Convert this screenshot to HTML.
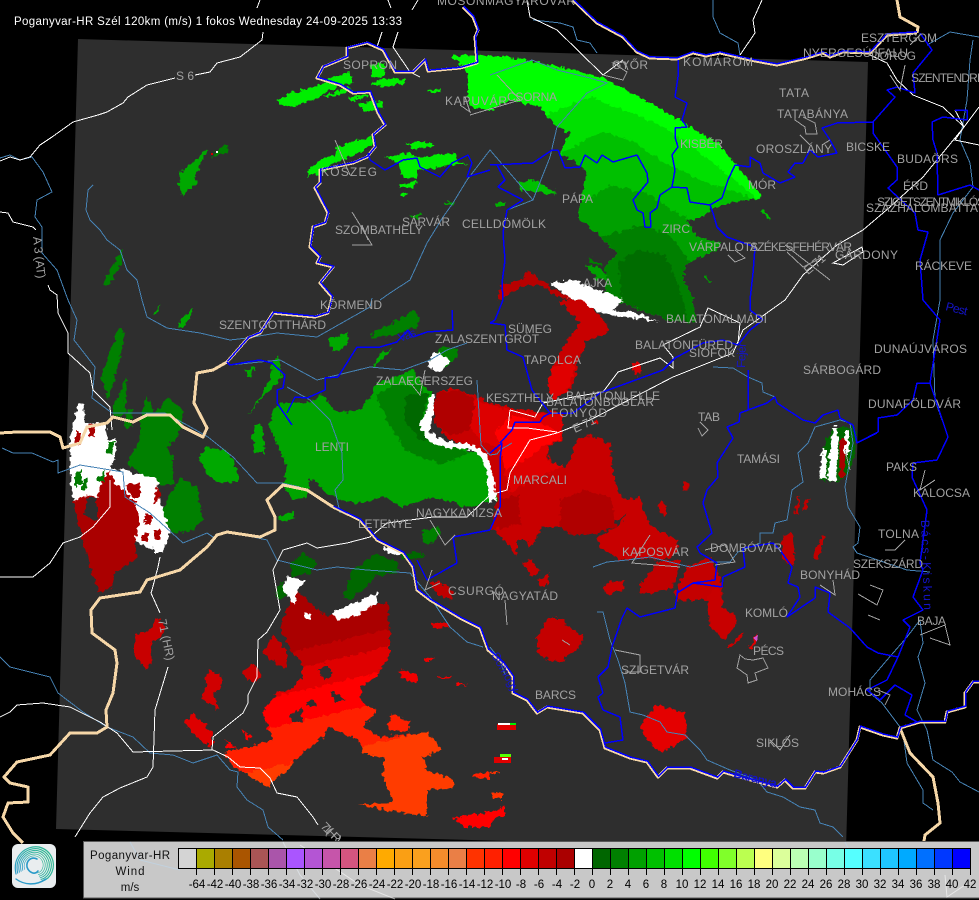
<!DOCTYPE html>
<html><head><meta charset="utf-8"><title>Poganyvar-HR</title>
<style>
html,body{margin:0;padding:0;background:#000;width:979px;height:900px;overflow:hidden}
svg{display:block;font-family:"Liberation Sans",sans-serif}
.lb text{fill:#a2a2a2;font-size:12px}
.rg text{fill:#1414c8;font-size:12px}
.t text{fill:#000;font-size:11.5px;text-anchor:middle}
.ln{shape-rendering:crispEdges}
</style></head><body>
<svg width="979" height="900" viewBox="0 0 979 900" xmlns="http://www.w3.org/2000/svg">
<defs>
<filter id="rough" filterUnits="userSpaceOnUse" x="0" y="0" width="979" height="900" color-interpolation-filters="sRGB">
<feTurbulence type="fractalNoise" baseFrequency="0.22" numOctaves="2" seed="4" result="n"/>
<feDisplacementMap in="SourceGraphic" in2="n" scale="7" xChannelSelector="R" yChannelSelector="G"/>
</filter>
<clipPath id="cm"><polygon points="453,55 490,56 523,59 573,70 603,78 640,97 680,120 717,143 737,165 763,198 747,200 713,207 703,217 687,220 697,237 720,243 717,250 700,257 687,263 683,277 693,300 696,322 668,320 620,302 605,290 605,267 618,253 600,237 578,217 583,190 587,170 560,153 570,133 557,127 540,107 510,100 490,110 472,108 468,95 468,78 463,65 453,60"/></clipPath>
<clipPath id="co"><polygon points="295,590 327,617 353,607 388,603 390,633 390,653 377,677 360,687 363,703 377,710 363,727 380,737 427,733 443,750 423,757 427,770 453,780 453,788 427,790 427,817 358,805 393,802 383,777 383,757 363,753 358,740 328,727 323,737 297,757 287,772 273,780 270,788 233,767 225,752 247,747 263,743 273,740 262,713 277,693 290,690 303,677 302,663 290,650 280,627"/></clipPath>
<linearGradient id="og" gradientUnits="userSpaceOnUse" x1="350" y1="620" x2="390" y2="790">
<stop offset="0" stop-color="#aa0000"/><stop offset=".1" stop-color="#aa0000"/><stop offset=".1" stop-color="#c00000"/><stop offset=".2" stop-color="#c00000"/><stop offset=".2" stop-color="#e00000"/><stop offset=".33" stop-color="#e00000"/><stop offset=".33" stop-color="#ff0000"/><stop offset=".5" stop-color="#ff0000"/><stop offset=".5" stop-color="#ff2000"/><stop offset=".72" stop-color="#ff2000"/><stop offset=".72" stop-color="#ff3c00"/><stop offset="1" stop-color="#ff3c00"/>
</linearGradient>
<linearGradient id="lg" gradientUnits="userSpaceOnUse" x1="14" y1="872" x2="54" y2="852">
<stop offset="0" stop-color="#2a9ac8"/><stop offset=".45" stop-color="#2eb0a5"/><stop offset="1" stop-color="#2cb88c"/>
</linearGradient>
<path id="sp" d="M16,874 C12,856 26,845 39,847 C51,850 56,862 52,872 C50,877 46,880 42,881"/>
<path id="hu" d="M463,7 473,17 478,30 475,37 477,63 460,68 428,71 425,60 413,72 395,72 383,50 367,43 347,48 347,57 323,67 317,78 340,85 353,93 370,92 378,113 385,125 373,135 375,147 367,157 353,163 320,170 320,183 315,188 328,213 325,223 313,227 310,247 320,257 317,263 333,267 320,283 332,297 328,313 315,317 273,313 260,333 248,338 227,362"/>
<path id="hu2" d="M333,507 360,520 377,540 403,553 413,567 417,590 430,600 460,618 480,628 488,650 503,663 513,677 513,693 527,700 537,713 547,707 583,713 600,730 605,748 630,758 647,762 658,777 667,768 690,768 717,778 723,772 743,778 777,787 785,780 793,788 805,788 815,772 823,773 840,767 857,740 860,727 883,735 897,738 900,728 920,722 945,722 947,712 965,707 965,693 973,682 979,682"/>
<path id="hu3" d="M573,0 597,23 623,37 637,52 650,58 677,59 693,53 706,56 720,53 750,60 777,65 807,58 823,53 830,57 843,52 870,53 887,35 917,33"/>
</defs>

<rect width="979" height="900" fill="#000"/>
<polygon points="78,39 868,62 846,850 56,829" fill="#2e2e2e"/>

<g filter="url(#rough)">
<!-- main green wedge -->
<g clip-path="url(#cm)">
<rect x="450" y="50" width="320" height="280" fill="#00ff00"/>
<polygon points="505,120 545,115 590,97 625,110 660,125 690,145 735,180 770,210 770,330 500,330" fill="#00e000"/>
<polygon points="550,160 600,132 630,140 660,160 700,180 745,195 770,210 770,330 550,330" fill="#00c000"/>
<polygon points="578,205 610,185 650,195 680,215 720,232 725,260 700,330 580,330" fill="#00a000"/>
<polygon points="598,238 640,225 670,235 690,262 700,330 600,330" fill="#008000"/>
<polygon points="618,262 640,250 665,255 680,290 690,330 625,330" fill="#006c00"/>
</g>
<polygon points="518,183 533,180 553,190 557,195 537,192 520,190" fill="#00c000"/>
<polygon points="587,257 600,263 602,267 590,263" fill="#008000"/>
<polygon points="763,210 770,218 768,220 762,212" fill="#00c000"/>
<polygon points="705,275 712,283 710,284 704,277" fill="#00a000"/>
<polygon points="496,203 506,203 506,206 496,206" fill="#00b000"/>
<polygon points="410,215 422,214 418,218 411,218" fill="#00a000"/>

<!-- small greens north -->
<g fill="#00ee00">
<polygon points="276,100 283,97 293,92 313,88 330,78 350,72 353,83 335,88 313,100 293,107 288,108 277,103"/>
<polygon points="322,97 347,87 353,90 333,97"/>
<polygon points="349,98 368,93 368,97 350,101"/>
<polygon points="358,103 383,102 383,107 370,112 360,108"/>
<polygon points="370,65 385,63 385,77 372,78"/>
<polygon points="372,82 390,78 405,80 405,83 388,87 372,85"/>
<polygon points="428,90 441,89 440,92 428,93"/>
<polygon points="307,170 320,160 335,155 337,147 370,137 375,143 353,157 333,163 320,173 308,177"/>
<polygon points="407,143 430,141 434,147 413,149"/>
<polygon points="385,157 407,153 417,157 455,153 457,162 467,163 460,165 417,170 417,178 403,178 398,163"/>
<polygon points="400,183 417,181 412,188 400,188"/>
<polygon points="400,193 409,192 402,197"/>
</g>
<g fill="#00a800">
<polygon points="180,173 193,163 207,150 200,165 195,177 197,183 182,195 179,183"/>
<polygon points="443,202 455,202 453,205 443,205"/>
<polygon points="178,328 183,317 193,307 192,315 182,328"/>
<polygon points="153,315 160,303 157,315"/>
<polygon points="245,370 255,367 250,378"/>
<polygon points="248,417 270,380 272,363 278,357 282,377 263,397 253,410"/>
<polygon points="255,425 262,425 265,453 255,453 252,440"/>
<polygon points="328,340 347,333 348,343 338,352 328,345"/>
<polygon points="372,367 380,353 393,348 383,358 373,368"/>
<polygon points="278,517 293,512 295,518 282,522"/>
<polygon points="198,457 208,447 227,450 238,470 238,482 217,483 207,473"/>
</g>
<g fill="#008000">
<polygon points="213,153 229,144 228,152 213,158"/>
<polygon points="103,285 117,257 123,248 122,263 108,285"/>
<polygon points="115,340 118,328 125,332 120,360 113,383 108,400 102,380 105,363"/>
<polygon points="113,407 127,377 125,415 113,415"/>
<polygon points="127,410 132,410 131,427 125,430"/>
<polygon points="140,417 147,395 155,413 167,397 183,410 183,423 177,437 167,447 173,457 173,485 157,485 143,477 127,463 140,440"/>
<polygon points="160,513 180,478 197,487 203,520 193,530 173,533"/>
<polygon points="372,333 393,323 413,310 420,317 417,327 393,335 373,338"/>
<polygon points="430,360 443,347 457,348 457,357 447,367 432,367"/>
<polygon points="422,530 437,527 442,533 430,545 423,540"/>
<polygon points="290,563 303,552 317,563 310,573 293,577" fill="#006800"/>
<polygon points="343,597 353,570 377,553 398,563 397,573 373,577 367,587 350,600" fill="#006800"/>
<polygon points="275,593 283,580 287,595 280,600" fill="#006800"/>
<polygon points="400,555 420,551 425,557 405,560" fill="#006800"/>
</g>

<!-- left big green blob -->
<polygon points="280,403 307,403 323,395 337,413 360,410 373,393 377,383 393,377 413,370 427,390 433,393 420,427 447,443 490,457 497,500 467,507 433,497 403,507 383,497 362,503 347,503 327,493 310,477 307,497 293,500 283,487 287,467 270,427 272,413" fill="#00a400"/>
<polygon points="375,395 395,385 420,385 428,400 420,430 445,445 470,452 440,465 405,450 390,425" fill="#008000"/>
<polygon points="405,395 428,393 420,428 440,440 420,440 405,420" fill="#006800"/>

<!-- central red -->
<polygon points="437,393 453,388 480,397 490,403 520,410 562,413 562,440 548,447 550,462 565,468 570,460 577,440 590,435 610,443 612,467 618,493 627,500 640,497 647,520 657,530 677,540 678,550 665,560 640,558 620,560 600,547 597,537 617,527 627,513 612,525 597,533 573,535 560,527 543,527 530,547 525,540 517,540 517,557 510,547 495,530 490,530 497,505 497,500 490,470 480,450 470,445 450,440 436,425 433,410" fill="#c80000"/>
<polygon points="470,397 490,405 520,412 562,415 562,438 548,447 548,462 565,466 530,480 510,495 500,450 480,440 468,425" fill="#dd0000"/>
<polygon points="495,430 515,415 545,425 560,432 560,440 545,445 525,460 505,470" fill="#ff0000"/>
<polygon points="437,393 460,390 475,400 470,430 450,435 436,425 433,410" fill="#b00000"/>
<polygon points="560,500 585,490 610,497 617,527 597,533 573,535 560,527" fill="#b00000"/>
<polygon points="497,500 520,495 520,525 490,530" fill="#b00000"/>
<!-- white band -->
<polygon points="435,395 430,395 427,410 420,425 425,438 440,447 470,449 482,457 488,478 488,503 496,500 494,478 486,453 470,444 445,441 430,432 433,412" fill="#fff"/>
<polygon points="433,352 445,355 450,362 438,372 428,367" fill="#fff"/>

<!-- Ajka red & white -->
<polygon points="497,300 500,285 525,278 527,272 535,275 550,287 575,300 560,298 540,285 525,285 512,292 505,298" fill="#b80000"/>
<polygon points="550,283 577,280 590,287 610,293 623,300 613,310 637,313 660,322 637,318 607,315 590,308 570,298" fill="#fff"/>
<polygon points="558,300 583,300 607,323 608,333 587,340 577,363 578,367 570,390 553,400 547,383 553,367 565,343 580,323" fill="#c80000"/>
<polygon points="553,367 570,360 575,368 568,390 553,400 547,383" fill="#e00000"/>
<polygon points="585,265 600,268 608,278 598,280" fill="#00a000"/>

<!-- west white / red -->
<polygon points="69,458 70,438 78,405 83,403 85,425 105,422 108,440 115,438 115,458 110,468 123,470 140,475 157,478 160,500 170,532 163,552 140,545 110,520 75,505 72,495" fill="#fff"/>
<polygon points="73,502 85,495 97,498 102,482 110,470 115,482 135,502 140,518 135,542 137,558 115,572 112,588 100,593 90,568" fill="#aa0000"/>
<polygon points="87,498 97,498 97,522 85,515" fill="#2e2e2e"/>
<polygon points="125,485 140,483 140,498 133,498" fill="#aa0000"/>
<polygon points="157,485 162,495 153,505" fill="#aa0000"/>
<polygon points="76,430 80,430 80,445 76,445" fill="#aa0000"/>
<polygon points="89,425 96,424 94,438 89,436" fill="#aa0000"/>
<polygon points="98,478 104,470 105,482 98,482" fill="#007800"/>
<polygon points="75,472 82,470 82,483 75,488" fill="#007800"/>
<polygon points="82,482 88,478 87,490 82,490" fill="#007800"/>
<polygon points="108,442 114,442 112,455 108,452" fill="#007800"/>
<polygon points="160,500 168,530 163,552 155,552 150,538 142,535 140,520" fill="#fff"/>
<polygon points="145,515 152,515 152,525 145,525" fill="#aa0000"/>
<polygon points="154,530 160,530 160,540 154,540" fill="#aa0000"/>
<polygon points="142,533 148,533 148,542 142,542" fill="#aa0000"/>

<!-- south reds -->
<polygon points="135,633 148,633 157,618 167,627 160,637 150,643 152,660 147,670 135,657" fill="#c80000"/>
<polygon points="263,653 273,635 287,650 287,668 275,663" fill="#c00000"/>
<polygon points="205,680 210,670 222,677 222,687 213,693 218,707 217,710 202,698 207,687" fill="#d00000"/>
<polygon points="242,673 252,663 263,675 257,683 248,680" fill="#c80000"/>
<polygon points="184,723 193,714 213,732 212,747 203,743" fill="#dd0000"/>
<polygon points="225,740 237,748 227,747" fill="#ff0000"/>
<polygon points="242,730 252,737 248,740" fill="#ff0000"/>
<polygon points="388,725 392,713 410,722 408,732 390,730" fill="#ff2000"/>
<polygon points="397,672 405,669 418,677 417,683 405,680" fill="#f00000"/>
<polygon points="425,657 433,658 433,661 427,661" fill="#ee0000"/>
<polygon points="438,677 452,677 450,679 440,679" fill="#ee0000"/>
<polygon points="457,683 467,685 457,686" fill="#ff0000"/>
<polygon points="432,623 448,623 448,627 433,628" fill="#dd0000"/>
<polygon points="472,775 490,772 490,778 472,777" fill="#ff2000"/>
<polygon points="452,818 490,812 505,807 505,815 495,818 490,827 465,827" fill="#ff0000"/>
<polygon points="492,793 503,792 503,798 492,798" fill="#ff3300"/>
<polygon points="490,772 500,772 500,773 490,773" fill="#ff3300"/>
<polygon points="430,582 440,582 452,590 452,600 437,595" fill="#c00000"/>
<polygon points="537,637 548,618 562,618 570,628 583,635 580,647 560,662 540,657 537,645" fill="#c40000"/>
<polygon points="603,587 610,582 625,580 623,590 607,595" fill="#c80000"/>
<polygon points="640,583 647,577 657,563 680,560 677,577 673,587 650,593 640,593" fill="#c00000"/>
<polygon points="675,593 687,567 710,557 717,570 723,587 712,600 690,600 677,600" fill="#c40000"/>
<polygon points="707,600 712,588 722,590 723,607 735,615 737,623 725,640 710,627 708,613" fill="#c80000"/>
<polygon points="727,648 743,632 743,637 730,648" fill="#c80000"/>
<polygon points="748,648 758,633 758,640 752,648" fill="#dd0000"/>
<polygon points="640,727 655,705 667,708 685,712 687,737 662,753 647,740" fill="#e40000"/>
<polygon points="782,537 792,532 795,557 793,567 783,560" fill="#c00000"/>
<polygon points="813,558 822,535 825,537 818,560" fill="#c00000"/>
<polygon points="794,513 798,497 800,497 798,515" fill="#c00000"/>
<polygon points="803,510 805,499 809,498 807,510" fill="#c00000"/>
<polygon points="683,492 683,482 690,482 689,490" fill="#c80000"/>
<polygon points="658,505 662,500 667,507 665,515 660,512" fill="#c80000"/>
<polygon points="522,562 532,560 539,572 533,577" fill="#c80000"/>
<polygon points="537,580 550,572 548,585 540,587" fill="#c80000"/>
<polygon points="632,363 640,363 642,370 637,377 632,370" fill="#d80000"/>
<polygon points="593,422 598,420 597,425" fill="#e00000"/>

<!-- right strip -->
<polygon points="819,480 823,448 833,427 853,427 857,433 855,455 848,473 838,482" fill="#006800"/>
<polygon points="833,427 838,427 838,450 836,482 828,480 830,450" fill="#fff"/>
<polygon points="819,478 823,448 826,448 826,480" fill="#fff"/>
<polygon points="840,438 846,440 844,475 839,480" fill="#aa0000"/>
<polygon points="845,430 849,430 849,455 845,455" fill="#fff"/>

<!-- south-west big orange -->
<polygon points="220,560 460,560 460,830 220,830" fill="url(#og)" clip-path="url(#co)"/>
<g fill="#2e2e2e">
<polygon points="290,715 302,708 302,722 292,722"/>
<polygon points="307,703 313,700 316,706 310,707"/>
<polygon points="318,670 328,665 333,675 325,680"/>
<polygon points="330,692 340,695 345,700 335,702"/>
</g>
<polygon points="287,577 307,580 297,590 295,605 283,590" fill="#fff"/>
<polygon points="333,613 353,603 377,593 377,603 353,617 337,620" fill="#fff"/>
<polygon points="305,612 310,615 310,621 305,617" fill="#fff"/>
<polygon points="385,546 402,552 400,556 385,552" fill="#fff"/>
</g>
<!-- crisp small details -->
<g shape-rendering="crispEdges">
<rect x="497" y="724" width="19" height="6" fill="#e00000"/>
<rect x="498" y="723" width="12" height="2" fill="#fff"/>
<rect x="510" y="723" width="6" height="2" fill="#00ee00"/>
<rect x="494" y="757" width="17" height="6" fill="#e00000"/>
<rect x="500" y="754" width="11" height="3" fill="#55ff00"/>
<rect x="502" y="758" width="6" height="2" fill="#fff"/>
<polygon points="753,638 758,635 757,642" fill="#d050d0"/>
<rect x="211" y="153" width="2" height="2" fill="#d00000"/><rect x="216" y="151" width="2" height="2" fill="#fff"/>
</g>

<!-- rivers -->
<g class="ln" fill="none" stroke="#4682b4" stroke-width="1">
<path d="M0,158 10,155 20,160 32,157 43,172 52,192 37,200 35,217 42,227 42,253 57,270 68,300 77,320 74,340 95,367 92,398 112,413 165,413 187,425 208,437 233,457 257,483 282,483 300,487"/>
<path d="M93,185 88,190 86,210 90,220 100,230 107,240 120,250 127,270 137,280 142,300 147,317 167,328 200,333 230,340 247,338 277,333 317,337 347,320 370,307 372,298"/>
<path d="M230,365 280,360 317,380 370,367 403,370 430,360 447,350 467,343"/>
<path d="M287,387 310,400 330,420 342,453 343,480 335,490 340,513"/>
<path d="M2,448 13,453 32,453 53,462 58,460 58,473 80,465 123,472 125,497 150,513 183,543 207,533 213,537 230,532 267,540 277,560 317,570 337,567 367,570 410,573 430,597 450,627 467,642 483,647"/>
<path d="M0,657 10,667 50,677 58,693 83,712 107,727 133,737 150,753 173,755 193,763 217,755 230,770 238,772 237,787 247,800 263,810 268,827 283,840"/>
<path d="M380,300 390,293 410,280 427,243 443,217 453,203 467,180 490,150 533,200"/>
<path d="M490,75 532,60 557,70 590,78 607,83 587,93 557,127 550,157 533,200 507,210"/>
<path d="M713,0 713,17 720,33 738,43 740,55"/>
<path d="M533,20 560,23 573,27 577,40 590,43 597,53"/>
<path d="M927,45 950,32 979,37"/>
<path d="M973,40 970,60 967,100 960,140 970,163 973,187 953,213 940,240 940,300 933,340 935,400 948,437"/>
<path d="M713,367 733,368 748,377 762,383 763,392 775,397"/>
<path d="M593,567 607,562 627,560 650,557 670,562 690,567 710,562 730,562 738,552 760,543 760,533 773,533 775,523 787,520 792,490 803,482 798,453 808,443 815,427 840,420 850,423 853,443 845,487 848,507 860,527 858,543 853,547 857,553 907,570 930,572"/>
<path d="M597,612 603,612 610,640 618,660 625,683 630,712 643,715 660,722 667,732 685,735 700,750 707,760 730,770 757,780 767,792 783,797 800,807 815,810 820,823 833,827 843,837"/>
<path d="M900,727 882,703 870,693 870,680 887,660 907,637 920,620 923,643 918,657 925,683 917,710 927,730 933,760 952,772 960,782 979,792"/>
<path d="M903,733 907,763 923,790 923,803 933,810"/>
<path d="M490,647 500,660 505,675"/>
<path d="M477,380 481,445 490,455 497,454 500,450 512,443"/>
<path d="M135,845 185,850 235,860 280,848 330,860"/>
</g>

<!-- white roads -->
<g class="ln" fill="none" stroke="#fff" stroke-width="1">
<path d="M263,32 262,40 240,57 217,63 210,72 195,75"/>
<path d="M175,78 147,85 128,97 123,103 107,112 98,115 73,122 52,137 40,145 30,157 20,160 10,157 0,161"/>
<path d="M0,212 8,213 13,222 33,227 36,230"/>
<path d="M48,285 50,290 57,295 58,313 68,333 68,353 90,373 93,390 110,407 112,430"/>
<path d="M0,577 33,577 50,563 63,543 80,537 93,527 110,507 110,480"/>
<path d="M160,557 158,567 152,590 151,593 160,613"/>
<path d="M168,667 155,710 153,767 147,777 120,788 103,797 90,813 75,837"/>
<path d="M0,717 10,712 17,705 43,703 70,707 100,722 117,733 133,752 213,750 228,757 240,767 260,768 270,778 277,793 297,797 313,817 318,825"/>
<path d="M212,750 213,737 243,713 248,703 248,695 257,677 258,640 267,632 280,610 273,570 283,550 307,543 317,548 347,543 370,537 387,523 433,517 467,517 490,495 507,490 510,473 530,440 557,433 590,420 673,377 733,353 743,330 785,300 803,275 837,245 863,230 890,207 923,177 964,127 979,107"/>
<path d="M964,127 943,107 913,95 897,80 887,63 870,55"/>
<path d="M740,55 755,33 753,20 762,0"/>
<path d="M510,410 535,417 543,403 573,397 603,392 618,372 660,358 673,368 673,357 663,345 700,327 708,308 740,323 738,343"/>
<path d="M510,410 508,428 527,428 557,432"/>
<path d="M260,0 257,8M388,0 391,8M418,0 412,10"/>
<path d="M382,32 377,47M398,32 393,47 410,72 420,77M527,0 530,17 557,30 603,75 623,60"/>
<path d="M833,263 862,247 863,252 843,265Z"/>
<path d="M964,127 955,140 979,145M955,110 964,127"/>
</g>

<!-- country borders -->
<g class="ln" fill="none" stroke="#f6d7a8" stroke-width="3" stroke-linejoin="round">
<use href="#hu"/><use href="#hu2"/><use href="#hu3"/>
<path d="M227,362 213,370 197,373 194,403 207,428 203,437 183,427 170,415 147,415 133,422 113,417 107,423 87,427 80,443 63,448 60,437 50,432 17,432 0,433"/>
<path d="M333,507 307,490 283,485 267,500 275,517 275,530 260,537 227,532 217,535 207,547 180,570 147,580 140,592 100,598 91,610 92,633 115,650 117,663 113,693 106,710 107,727 97,733 70,733 50,755 17,762 4,777 10,783 28,787 28,802 8,803 3,817 13,833 23,843"/>
<path d="M900,728 910,753 933,777 938,803 940,823 925,835 923,847"/>
<path d="M917,33 918,27 900,17 897,0"/>
</g>

<!-- blue county lines -->
<g class="ln" fill="none" stroke="#0000ff" stroke-width="1.5" stroke-linejoin="round">
<use href="#hu" transform="translate(.7,-.8)"/><use href="#hu2" transform="translate(.6,-.9)"/><use href="#hu3" transform="translate(0,-1.2)"/>
<path d="M227,362 230,365 247,362 260,360 272,363 285,375 283,388 277,390 277,403 292,425"/>
<path d="M678,60 678,77 675,97 687,103 682,120 687,127 675,128 675,137 678,147 672,155 675,170 672,187 687,188 690,202 710,205 722,198 728,180 735,165 750,167 750,157 760,163 763,173 780,183 795,177 788,172 795,163 803,163 810,150 818,157 837,153 830,140 822,128 837,123 873,122 895,97 887,90 897,87 915,93 913,73 932,50 920,33"/>
<path d="M955,110 967,110 967,120 943,117 932,122 933,140 937,153 938,195 970,185 979,190"/>
<path d="M873,122 873,133 897,167 897,180 888,188 915,213 918,230 928,232 920,260 923,300 940,320 930,383 948,437 937,460 913,463 912,477 927,510 920,563 923,570 913,597 923,610 903,620 910,627 898,657 878,653 867,647 850,628 828,612 830,593 815,587 815,598 787,617 800,597 798,587 788,583 792,567 780,550 773,543 743,548 745,567 723,577 722,587 693,583 677,593 678,590 675,608 640,617 627,608 622,618 612,647 608,667 598,677 603,693 598,697 603,710 620,717 623,740 605,743"/>
<path d="M930,383 917,383 913,400 897,415 878,418 878,432 857,443"/>
<path d="M898,657 887,680 867,690 880,700 895,685 912,695 905,715 917,722"/>
<path d="M490,323 505,325 507,350 523,357 532,390 550,413 573,413 600,393 663,370 675,358 703,343 723,340 738,345 750,330 763,320 750,310 750,300 753,273 755,247 727,237 717,227 713,213 710,205"/>
<path d="M748,370 748,410 740,413 739,422 727,427 733,438 717,463 718,477 707,490 703,503 712,533 697,547 700,553 717,563 715,580 693,583"/>
<path d="M748,410 767,403 775,397 777,403 803,420 815,423 823,415 838,410 840,418 853,425 857,443 877,433"/>
<path d="M490,165 533,163 552,150 558,150 565,168 580,167 585,155 597,163 602,155 613,162 637,155 647,173 648,182 633,200 637,210 643,213 645,227 651,227 650,213 657,208 660,195 672,187"/>
<path d="M497,165 505,180 498,187 523,200 507,210 503,233 505,260 502,283 503,300 495,320 490,323"/>
<path d="M368,153 370,160 385,170 403,160 417,158 420,167 440,177 452,163 468,155 472,163 467,177 490,170"/>
<path d="M452,310 453,330 427,332 413,337 408,330 397,342 380,347 357,347 338,377 325,378 325,390 307,398 295,397 287,413"/>
<path d="M490,530 453,537 457,563 427,580 417,560"/>
<path d="M490,530 500,507 500,460 502,443 490,453"/>
<path d="M500,443 512,430 515,422 540,422 543,417 550,413"/>
</g>

<!-- city outlines -->
<g class="ln" fill="none" stroke="#a2a2a2" stroke-width="1">
<path d="M740,655 737,668 747,675 748,683 757,680 755,673 768,668 763,658 753,660 745,659Z"/>
<path d="M787,252 803,267 823,257"/>
<path d="M795,112 795,120 805,127 806,134 817,134 815,123 803,117"/>
<path d="M603,75 623,80 627,72 613,63 625,62 628,70"/>
<path d="M352,212 360,225 372,245 352,245M362,225 368,240"/>
<path d="M465,97 470,112 460,105M728,255 735,262 745,258 735,250M700,422 708,430 702,436 698,428"/>
<path d="M680,567 632,563 650,535M705,550 725,545 735,562 715,565"/>
<path d="M432,570 425,590 440,583"/>
<path d="M858,594 877,605 883,590 870,585M868,615 880,620"/>
<path d="M615,650 640,655 640,672 625,672"/>
<path d="M920,635 945,625 950,645 930,638"/>
<path d="M925,470 920,490 935,480M905,540 895,550 885,550"/>
<path d="M920,35 910,45M845,450 850,470"/>
<path d="M785,245 830,280M800,135 810,145"/>
<path d="M822,145 830,140M335,140 350,175"/>
<path d="M408,380 420,395 425,370M497,75 520,100 470,115"/>
<path d="M890,75 900,90 905,65"/>
<path d="M820,585 835,595 833,580"/>
<path d="M770,740 780,750 790,735"/>
<path d="M878,690 890,695 885,705"/>
<path d="M430,520 445,545 455,535"/>
<path d="M562,640 570,645M505,600 507,625"/>
</g>

<!-- labels -->
<g class="lb">
<text x="437" y="5" textLength="138">MOSONMAGYARÓVÁR</text>
<text x="343" y="69" textLength="54">SOPRON</text>
<text x="445" y="105" textLength="62">KAPUVÁR</text>
<text x="507" y="101" textLength="50">CSORNA</text>
<text x="612" y="69" textLength="36">GYŐR</text>
<text x="683" y="66" textLength="70">KOMÁROM</text>
<text x="779" y="97" textLength="30">TATA</text>
<text x="777" y="118" textLength="71">TATABÁNYA</text>
<text x="680" y="148" textLength="43">KISBÉR</text>
<text x="756" y="153" textLength="76">OROSZLÁNY</text>
<text x="846" y="151" textLength="44">BICSKE</text>
<text x="861" y="42" textLength="76">ESZTERGOM</text>
<text x="803" y="57" textLength="105">NYERGESÚJFALU</text>
<text x="871" y="60" textLength="45">DOROG</text>
<text x="911" y="82" textLength="74">SZENTENDRE</text>
<text x="897" y="163" textLength="61">BUDAÖRS</text>
<text x="903" y="190" textLength="25">ÉRD</text>
<text x="877" y="206" textLength="108">SZIGETSZENTMIKLÓS</text>
<text x="866" y="212" textLength="112">SZÁZHALOMBATTA</text>
<text x="915" y="270" textLength="57">RÁCKEVE</text>
<text x="835" y="259" textLength="63">GÁRDONY</text>
<text x="750" y="251" textLength="102">SZÉKESFEHÉRVÁR</text>
<text x="689" y="251" textLength="69">VÁRPALOTA</text>
<text x="662" y="233" textLength="28">ZIRC</text>
<text x="748" y="189" textLength="28">MÓR</text>
<text x="562" y="203" textLength="31">PÁPA</text>
<text x="583" y="287" textLength="29">AJKA</text>
<text x="462" y="228" textLength="84">CELLDÖMÖLK</text>
<text x="402" y="226" textLength="48">SÁRVÁR</text>
<text x="335" y="234" textLength="88">SZOMBATHELY</text>
<text x="321" y="176" textLength="56">KŐSZEG</text>
<text x="320" y="309" textLength="62">KÖRMEND</text>
<text x="219" y="329" textLength="107">SZENTGOTTHÁRD</text>
<text x="435" y="343" textLength="104">ZALASZENTGRÓT</text>
<text x="508" y="333" textLength="44">SÜMEG</text>
<text x="524" y="364" textLength="57">TAPOLCA</text>
<text x="376" y="385" textLength="97">ZALAEGERSZEG</text>
<text x="486" y="402" textLength="68">KESZTHELY</text>
<text x="566" y="400" textLength="94">BALATONLELLE</text>
<text x="546" y="406" textLength="108">BALATONBOGLÁR</text>
<text x="551" y="417" textLength="56">FONYÓD</text>
<text x="635" y="349" textLength="98">BALATONFÜRED</text>
<text x="689" y="357" textLength="46">SIÓFOK</text>
<text x="666" y="323" textLength="101">BALATONALMÁDI</text>
<text x="874" y="353" textLength="93">DUNAÚJVÁROS</text>
<text x="803" y="374" textLength="78">SÁRBOGÁRD</text>
<text x="868" y="408" textLength="93">DUNAFÖLDVÁR</text>
<text x="698" y="421" textLength="22">TAB</text>
<text x="737" y="463" textLength="43">TAMÁSI</text>
<text x="886" y="471" textLength="31">PAKS</text>
<text x="913" y="497" textLength="57">KALOCSA</text>
<text x="878" y="538" textLength="41">TOLNA</text>
<text x="853" y="568" textLength="70">SZEKSZÁRD</text>
<text x="800" y="579" textLength="60">BONYHÁD</text>
<text x="710" y="552" textLength="72">DOMBÓVÁR</text>
<text x="622" y="556" textLength="67">KAPOSVÁR</text>
<text x="513" y="484" textLength="54">MARCALI</text>
<text x="416" y="517" textLength="86">NAGYKANIZSA</text>
<text x="358" y="528" textLength="54">LETENYE</text>
<text x="315" y="451" textLength="34">LENTI</text>
<text x="448" y="595" textLength="56">CSURGÓ</text>
<text x="492" y="600" textLength="66">NAGYATÁD</text>
<text x="535" y="699" textLength="41">BARCS</text>
<text x="621" y="674" textLength="68">SZIGETVÁR</text>
<text x="745" y="617" textLength="43">KOMLÓ</text>
<text x="753" y="655" textLength="31">PÉCS</text>
<text x="828" y="696" textLength="53">MOHÁCS</text>
<text x="756" y="747" textLength="43">SIKLÓS</text>
<text x="917" y="625" textLength="29">BAJA</text>
<text x="176" y="80" textLength="18">S 6</text>
<text transform="translate(33,237) rotate(84)" textLength="42">A 3 (AT)</text>
<text transform="translate(158,620) rotate(78)" textLength="42">71 (HR)</text>
<text transform="translate(808,275) rotate(-40)" textLength="24">E 71</text>
<text transform="translate(575,433) rotate(-25)" textLength="24">E 71</text>
<text transform="translate(320,827) rotate(45)" textLength="24">71 (HR)</text>
</g>
<g class="rg">
<text transform="translate(733,777) rotate(14)" textLength="44" font-weight="bold">Baranya</text>
<text transform="translate(921,520) rotate(88)" textLength="90">Bács-Kiskun</text>
<text transform="translate(745,368) rotate(-88)" textLength="25">Fejér</text>
<text transform="translate(400,342) rotate(-20)" textLength="18">Vas</text>
<text transform="translate(491,655) rotate(60)" textLength="44">Somogy</text>
<text transform="translate(945,310) rotate(14)" textLength="22">Pest</text>
</g>

<text x="14" y="25" fill="#fff" font-size="11.5" textLength="388">Poganyvar-HR Szél 120km (m/s) 1 fokos Wednesday 24-09-2025 13:33</text>

<!-- legend -->
<rect x="83.5" y="841.5" width="900" height="56.5" fill="#c8c8c8" stroke="#5a5a5a" stroke-width="1"/>
<g fill="none" stroke-width="1" opacity=".55">
<path d="M130,842 140,860 180,870" stroke="#bcd8f0"/>
<path d="M300,845 360,885 395,899" stroke="#fff"/>
<path d="M283,842 300,875 320,899" stroke="#e8f0f8"/>
<path d="M845,842 848,848" stroke="#bcd8f0"/>
<path d="M945,875 947,897 965,885" stroke="#fff"/>
</g>
<g text-anchor="middle" fill="#111" font-size="11.5">
<text x="130" y="859" textLength="80" lengthAdjust="spacing">Poganyvar-HR</text>
<text x="130" y="875" textLength="29">Wind</text>
<text x="130" y="891">m/s</text>
</g>
<g shape-rendering="crispEdges">
<rect x="178" y="849" width="18" height="19" fill="#d4d4d4"/><rect x="196" y="849" width="18" height="19" fill="#aaaa00"/><rect x="214" y="849" width="18" height="19" fill="#aa7f00"/><rect x="232" y="849" width="18" height="19" fill="#aa5500"/><rect x="250" y="849" width="18" height="19" fill="#aa5555"/><rect x="268" y="849" width="18" height="19" fill="#aa55aa"/><rect x="286" y="849" width="18" height="19" fill="#aa55ff"/><rect x="304" y="849" width="18" height="19" fill="#b455d4"/><rect x="322" y="849" width="18" height="19" fill="#c655aa"/><rect x="340" y="849" width="18" height="19" fill="#d4557f"/><rect x="358" y="849" width="18" height="19" fill="#ea7f46"/><rect x="376" y="849" width="18" height="19" fill="#ffaa00"/><rect x="394" y="849" width="18" height="19" fill="#fa9f14"/><rect x="412" y="849" width="18" height="19" fill="#faa01e"/><rect x="430" y="849" width="18" height="19" fill="#f58c2c"/><rect x="448" y="849" width="18" height="19" fill="#ea7f46"/><rect x="466" y="849" width="18" height="19" fill="#ff3300"/><rect x="484" y="849" width="18" height="19" fill="#ff2000"/><rect x="502" y="849" width="18" height="19" fill="#ff0000"/><rect x="520" y="849" width="18" height="19" fill="#e00000"/><rect x="538" y="849" width="18" height="19" fill="#c00000"/><rect x="556" y="849" width="18" height="19" fill="#aa0000"/><rect x="574" y="849" width="18" height="19" fill="#ffffff"/><rect x="592" y="849" width="18" height="19" fill="#006600"/><rect x="610" y="849" width="18" height="19" fill="#008000"/><rect x="628" y="849" width="18" height="19" fill="#00a000"/><rect x="646" y="849" width="18" height="19" fill="#00c000"/><rect x="664" y="849" width="18" height="19" fill="#00e000"/><rect x="682" y="849" width="18" height="19" fill="#00ff00"/><rect x="700" y="849" width="18" height="19" fill="#40ff00"/><rect x="718" y="849" width="18" height="19" fill="#80ff2a"/><rect x="736" y="849" width="18" height="19" fill="#bbff50"/><rect x="754" y="849" width="18" height="19" fill="#ffff7f"/><rect x="772" y="849" width="18" height="19" fill="#dcff9b"/><rect x="790" y="849" width="18" height="19" fill="#bbffb4"/><rect x="808" y="849" width="18" height="19" fill="#99ffcc"/><rect x="826" y="849" width="18" height="19" fill="#77ffe6"/><rect x="844" y="849" width="18" height="19" fill="#55ffff"/><rect x="862" y="849" width="18" height="19" fill="#3be0ff"/><rect x="880" y="849" width="18" height="19" fill="#1fc6ff"/><rect x="898" y="849" width="18" height="19" fill="#00aaff"/><rect x="916" y="849" width="18" height="19" fill="#0070ff"/><rect x="934" y="849" width="18" height="19" fill="#0038ff"/><rect x="952" y="849" width="18" height="19" fill="#0000ff"/>
<rect x="178.5" y="848.5" width="792" height="20" fill="none" stroke="#000"/>
<path stroke="#000" fill="none" d="M196.500,849V875M214.500,849V875M232.500,849V875M250.500,849V875M268.500,849V875M286.500,849V875M304.500,849V875M322.500,849V875M340.500,849V875M358.500,849V875M376.500,849V875M394.500,849V875M412.500,849V875M430.500,849V875M448.500,849V875M466.500,849V875M484.500,849V875M502.500,849V875M520.500,849V875M538.500,849V875M556.500,849V875M574.500,849V875M592.500,849V875M610.500,849V875M628.500,849V875M646.500,849V875M664.500,849V875M682.500,849V875M700.500,849V875M718.500,849V875M736.500,849V875M754.500,849V875M772.500,849V875M790.500,849V875M808.500,849V875M826.500,849V875M844.500,849V875M862.500,849V875M880.500,849V875M898.500,849V875M916.500,849V875M934.500,849V875M952.500,849V875M970.500,849V875"/>
</g>
<g class="t">
<text x="197" y="888">-64</text><text x="215" y="888">-42</text><text x="233" y="888">-40</text><text x="251" y="888">-38</text><text x="269" y="888">-36</text><text x="287" y="888">-34</text><text x="305" y="888">-32</text><text x="323" y="888">-30</text><text x="341" y="888">-28</text><text x="359" y="888">-26</text><text x="377" y="888">-24</text><text x="395" y="888">-22</text><text x="413" y="888">-20</text><text x="431" y="888">-18</text><text x="449" y="888">-16</text><text x="467" y="888">-14</text><text x="485" y="888">-12</text><text x="503" y="888">-10</text><text x="521" y="888">-8</text><text x="539" y="888">-6</text><text x="557" y="888">-4</text><text x="575" y="888">-2</text><text x="592" y="888">0</text><text x="610" y="888">2</text><text x="628" y="888">4</text><text x="646" y="888">6</text><text x="664" y="888">8</text><text x="682" y="888">10</text><text x="700" y="888">12</text><text x="718" y="888">14</text><text x="736" y="888">16</text><text x="754" y="888">18</text><text x="772" y="888">20</text><text x="790" y="888">22</text><text x="808" y="888">24</text><text x="826" y="888">26</text><text x="844" y="888">28</text><text x="862" y="888">30</text><text x="880" y="888">32</text><text x="898" y="888">34</text><text x="916" y="888">36</text><text x="934" y="888">38</text><text x="952" y="888">40</text><text x="970" y="888">42</text>
</g>

<!-- logo -->
<rect x="12" y="844" width="44" height="44" rx="6" fill="#e9edef"/>
<g fill="none" stroke="url(#lg)" stroke-width="1.2" stroke-linecap="round">
<use href="#sp"/>
<use href="#sp" transform="translate(33,865) scale(.9) translate(-33,-865)"/>
<use href="#sp" transform="translate(33,865) scale(.8) translate(-33,-865)"/>
<use href="#sp" transform="translate(33,865) scale(.7) translate(-33,-865)"/>
<use href="#sp" transform="translate(33,865) scale(.6) translate(-33,-865)"/>
<use href="#sp" transform="translate(33,865) scale(.5) translate(-33,-865)"/>
<path d="M37,859 C31,856 26,861 27,867 C29,873 35,875 38,871" stroke="#2a9ac8" stroke-width="1.6"/>
<path d="M16,879 C24,885 36,886 46,879" stroke="#2a9ac8" stroke-width="1.4"/>
</g>
</svg>
</body></html>
